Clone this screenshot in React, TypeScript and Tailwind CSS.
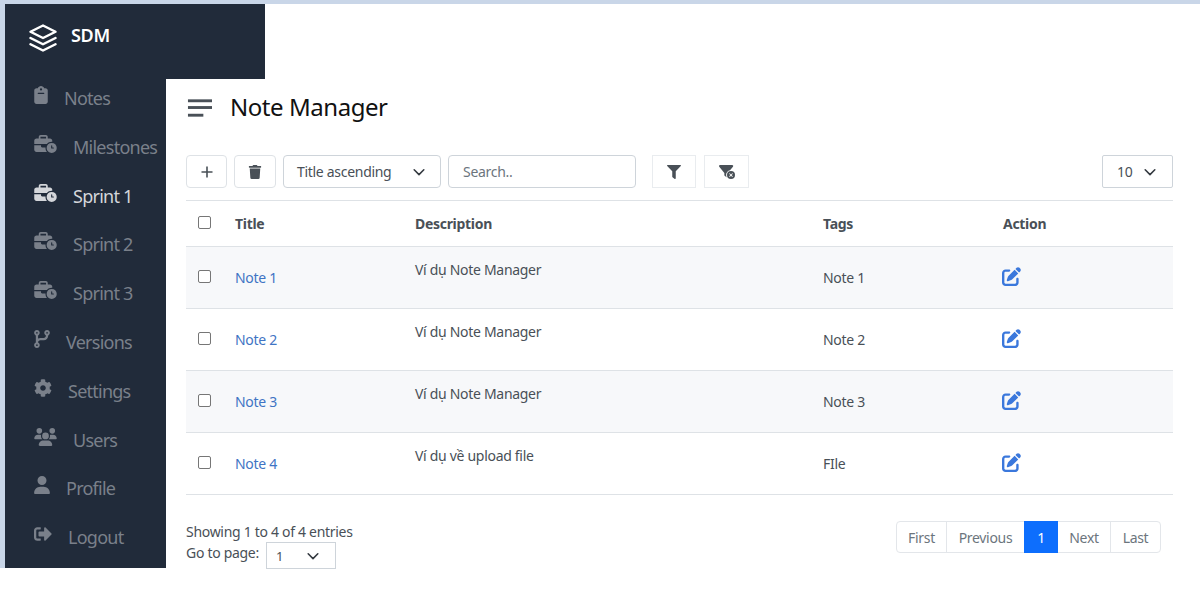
import React from "react";
import { FaCog, FaFilter, FaSignOutAlt, FaTrash } from "react-icons/fa";
import { FaBusinessTime, FaClipboard, FaCodeBranch, FaFilterCircleXmark, FaPenToSquare, FaUser, FaUsers } from "react-icons/fa6";
import { FiLayers } from "react-icons/fi";

const nav = [
  { label: "Notes", Icon: FaClipboard, w: "w-[14px]" },
  { label: "Milestones", Icon: FaBusinessTime, w: "w-[23px]" },
  { label: "Sprint 1", Icon: FaBusinessTime, w: "w-[23px]", active: true },
  { label: "Sprint 2", Icon: FaBusinessTime, w: "w-[23px]" },
  { label: "Sprint 3", Icon: FaBusinessTime, w: "w-[23px]" },
  { label: "Versions", Icon: FaCodeBranch, w: "w-[16px]" },
  { label: "Settings", Icon: FaCog, w: "w-[18px]" },
  { label: "Users", Icon: FaUsers, w: "w-[23px]" },
  { label: "Profile", Icon: FaUser, w: "w-[16px]" },
  { label: "Logout", Icon: FaSignOutAlt, w: "w-[18px]" },
];

const rows = [
  { t: "Note 1", d: "Ví dụ Note Manager", g: "Note 1" },
  { t: "Note 2", d: "Ví dụ Note Manager", g: "Note 2" },
  { t: "Note 3", d: "Ví dụ Note Manager", g: "Note 3" },
  { t: "Note 4", d: "Ví dụ về upload file", g: "FIle" },
];

function Chevron() {
  return (
    <svg viewBox="0 0 16 16" className="h-[14px] w-[14px]" fill="none" stroke="#343a40" strokeWidth="1.8" strokeLinecap="round" strokeLinejoin="round">
      <path d="M2.5 5.5l5.5 5.5 5.5-5.5" />
    </svg>
  );
}

function Check() {
  return <span className="block h-[13px] w-[13px] rounded-[2px] border border-[#767676] bg-white" />;
}

export default function App() {
  return (
    <div className="h-[589px] w-[1200px] overflow-hidden bg-white text-[14px] tracking-[-0.3px] text-[#495057] [font-family:'Noto_Sans',sans-serif]">
      <div className="h-1 bg-[#c9d6e8]" />
      <div className="flex h-[75px] w-[265px] items-start gap-[13px] border-l-[5px] border-[#c9d6e8] bg-[#212b3a] pl-[23px] pt-[19px]">
        <FiLayers className="h-[30px] w-[30px] text-white" />
        <span className="text-[18px] leading-[24px] font-semibold text-white">SDM</span>
      </div>
      <div className="flex">
        <aside className="h-[489px] w-[166px] shrink-0 border-l-[5px] border-[#c9d6e8] bg-[#212b3a] pl-[29px]">
          <div className="-mt-[4.8px]">
            {nav.map(({ label, Icon, active, w }) => (
              <div key={label} className={`flex h-[48.8px] items-center gap-[16px] pb-[1px] ${active ? "text-[#d4d6da]" : "text-[#7a808a]"}`}>
                <Icon className={`mb-[6px] h-[18px] shrink-0 ${w}`} />
                <span className="text-[18px] leading-none tracking-[-0.75px]">{label}</span>
              </div>
            ))}
          </div>
        </aside>
        <main className="min-w-0 flex-1 pl-[20px] pr-[27px]">
          <div className="flex h-[76px] items-center gap-[18px] pb-[19px]">
            <svg viewBox="0 0 26 18" className="ml-[1px] h-[18px] w-[25px]" fill="#495057">
              <rect x="1" y="0" width="25" height="3" />
              <rect x="1" y="7" width="25" height="3" />
              <rect x="1" y="15" width="16" height="3" />
            </svg>
            <h1 className="-mt-[2px] text-[24px] leading-[32px] font-normal tracking-[-0.45px] text-[#111]">Note Manager</h1>
          </div>
          <div className="flex h-[33px] items-stretch">
            <button className="flex w-[41px] items-center justify-center rounded-[4px] border border-[#dee2e6]">
              <svg viewBox="0 0 14 14" className="h-[14px] w-[14px]" stroke="#495057" strokeWidth="1.6" fill="none">
                <path d="M7 1.5v11M1.5 7h11" />
              </svg>
            </button>
            <button className="ml-[7px] flex w-[42px] items-center justify-center rounded-[4px] border border-[#dee2e6]"><FaTrash className="text-[14px]" /></button>
            <div className="ml-[7px] flex w-[158px] items-center justify-between rounded-[4px] border border-[#ced4da] pl-[13px] pr-[14px]"><span>Title ascending</span><Chevron /></div>
            <div className="ml-[7px] flex w-[188px] items-center rounded-[4px] border border-[#ced4da] pl-[14px] text-[#6c757d]">Search..</div>
            <button className="ml-[16px] flex w-[44px] items-center justify-center border border-[#e9ecef]"><FaFilter className="text-[14px]" /></button>
            <button className="ml-[8px] flex w-[45px] items-center justify-center border border-[#e9ecef]"><FaFilterCircleXmark className="text-[16px]" /></button>
            <div className="ml-auto flex w-[71px] items-center justify-between rounded-[2px] border border-[#ced4da] pl-[14px] pr-[15px]"><span>10</span><Chevron /></div>
          </div>
          <table className="mt-[12px] w-full table-fixed border-collapse">
            <colgroup>
              <col className="w-[49px]" /><col className="w-[180px]" /><col className="w-[408px]" /><col className="w-[180px]" /><col />
            </colgroup>
            <thead>
              <tr className="h-[46px] border-y border-[#dee2e6] text-left">
                <th className="pl-3 align-middle"><div className="-mt-[2px]"><Check /></div></th>
                <th className="font-bold">Title</th>
                <th className="font-bold">Description</th>
                <th className="font-bold">Tags</th>
                <th className="font-bold">Action</th>
              </tr>
            </thead>
            <tbody>
              {rows.map((r, i) => (
                <tr key={r.t} className={`h-[62px] border-b border-[#dee2e6] ${i % 2 === 0 ? "bg-[#f7f8fa]" : "bg-white"}`}>
                  <td className="pl-3"><div className="-mt-[2px]"><Check /></div></td>
                  <td className="text-[#3f74c4]">{r.t}</td>
                  <td className="pb-[16px]">{r.d}</td>
                  <td>{r.g}</td>
                  <td><FaPenToSquare className="-ml-px -mt-[2px] h-[19px] w-[19px] text-[#3b78dc]" /></td>
                </tr>
              ))}
            </tbody>
          </table>
          <div className="mt-[26px] flex items-start justify-between pr-[12px]">
            <div>
              <div className="leading-[22px]">Showing 1 to 4 of 4 entries</div>
              <div className="-mt-px flex items-start gap-[7px] leading-[20px]">
                <span className="mt-px">Go to page:</span>
                <div className="flex h-[27px] w-[70px] items-center justify-between border border-[#ced4da] pl-[9px] pr-[15px] text-[13px]"><span>1</span><Chevron /></div>
              </div>
            </div>
            <div className="flex h-[32px] items-stretch rounded-[4px] border border-[#e3e6ea] text-[#6c757d]">
              <span className="flex w-[50px] items-center justify-center border-r border-[#e3e6ea]">First</span>
              <span className="flex w-[77px] items-center justify-center">Previous</span>
              <span className="-my-px flex w-[34px] items-center justify-center bg-[#0d6efd] text-white">1</span>
              <span className="flex w-[53px] items-center justify-center border-r border-[#e3e6ea]">Next</span>
              <span className="flex w-[49px] items-center justify-center">Last</span>
            </div>
          </div>
        </main>
      </div>
    </div>
  );
}
